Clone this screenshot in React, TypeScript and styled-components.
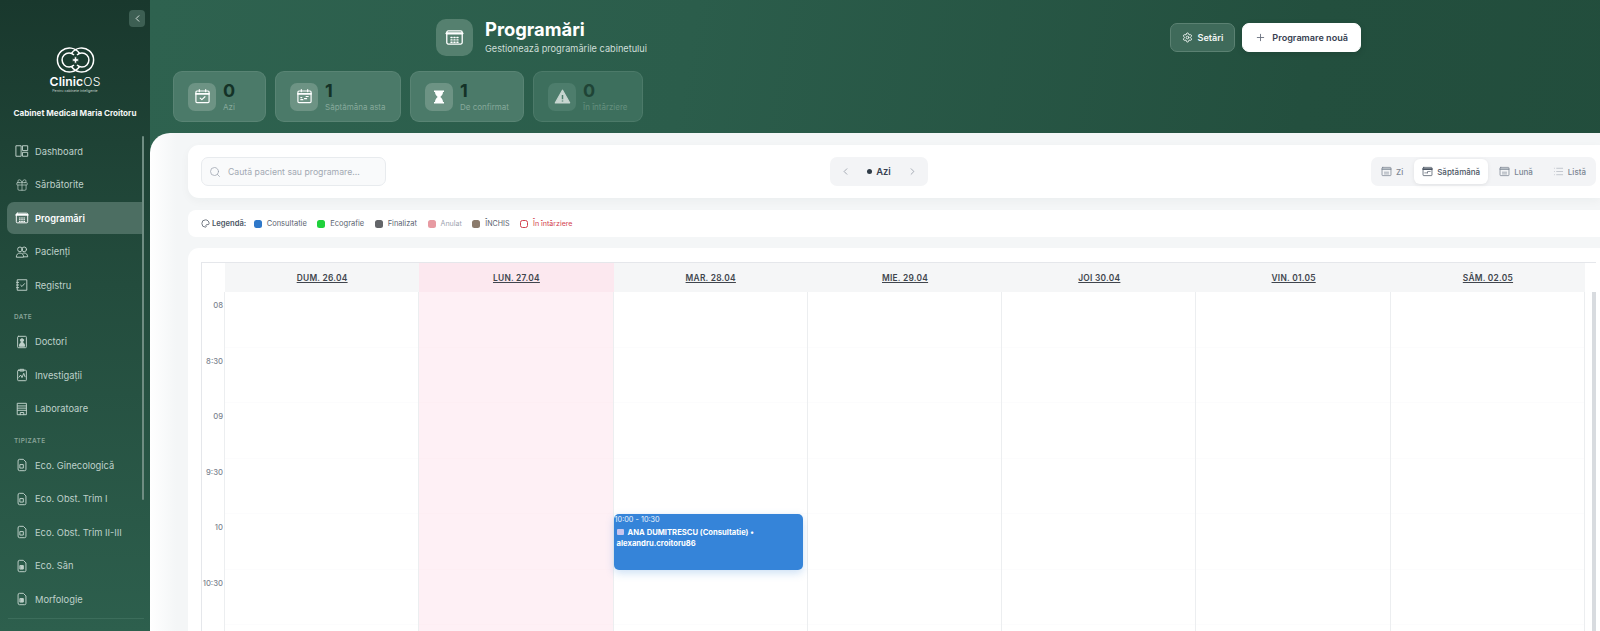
import styled, { createGlobalStyle } from "styled-components";
import { ChevronLeft, ChevronRight, Gift, Plus, Search, Settings, List } from "lucide-react";
import type { ReactNode } from "react";

const GlobalStyle = createGlobalStyle`
  html, body, #root { margin: 0; height: 100%; }
  body { font-family: Inter, "Liberation Sans", sans-serif; overflow: hidden; background: #f4f6f7; }
  * { box-sizing: border-box; }
`;

const Page = styled.div`
  display: grid;
  grid-template-columns: 150px 1fr;
  width: 1600px;
  height: 631px;
  overflow: hidden;
`;

const Sidebar = styled.aside`
  position: relative;
  display: flex;
  flex-direction: column;
  height: 631px;
  overflow: hidden;
  background: linear-gradient(180deg, #19382d 0%, #234c3d 45%, #2d5f4d 100%);
`;

const CollapseButton = styled.button`
  position: absolute;
  top: 10px;
  left: 129px;
  display: flex;
  align-items: center;
  justify-content: center;
  width: 16px;
  height: 17px;
  padding: 0;
  border: 0;
  border-radius: 4px;
  background: #3d5f53;
  color: #dfe8e4;
`;

const Brand = styled.div`
  display: flex;
  flex-direction: column;
  align-items: center;
  padding-top: 47px;
  height: 134.6px;
`;

const LogoName = styled.div`
  margin-top: 3px;
  font-size: 12.2px;
  line-height: 12px;
  font-weight: 600;
  color: #fff;
  letter-spacing: 0.1px;
  span { font-weight: 300; }
`;

const LogoTag = styled.div`
  font-size: 3.6px;
  line-height: 6px;
  color: #c6d4ce;
`;

const CabinetName = styled.div`
  margin-top: 13px;
  font-size: 8.1px;
  line-height: 12px;
  font-weight: 700;
  color: #f3f6f5;
  white-space: nowrap;
`;

const NavScroll = styled.nav`
  position: relative;
  flex: 1;
  padding: 0 8px 0 7px;
`;

const ScrollThumb = styled.div`
  position: absolute;
  top: 1px;
  left: 142px;
  width: 2px;
  height: 364px;
  border-radius: 1px;
  background: #6f8d82;
`;

const NavItem = styled.div<{ $active?: boolean }>`
  display: flex;
  align-items: center;
  gap: 6px;
  height: ${({ $active }) => ($active ? "32px" : "33.5px")};
  margin: ${({ $active }) => ($active ? "0.75px 0" : "0")};
  padding-left: 8px;
  border-radius: ${({ $active }) => ($active ? "7px 0 0 7px" : "7px")};
  font-size: 9.3px;
  font-weight: ${({ $active }) => ($active ? 600 : 400)};
  color: ${({ $active }) => ($active ? "#fff" : "#bfd1ca")};
  background: ${({ $active }) => ($active ? "#4c6e62" : "transparent")};
  svg { flex: none; }
`;

const NavSection = styled.div`
  height: 14px;
  margin-top: 9px;
  padding-left: 7px;
  font-size: 6.4px;
  line-height: 12px;
  font-weight: 600;
  letter-spacing: 0.4px;
  color: #88a398;
`;

const SidebarDivider = styled.div`
  position: absolute;
  left: 8px;
  right: 6px;
  top: 618px;
  height: 1px;
  background: #3c6d5b;
`;

const Main = styled.main`
  display: flex;
  flex-direction: column;
  min-width: 0;
  height: 631px;
  background: linear-gradient(100deg, #2e624f 0%, #2b5d4b 35%, #234f3e 75%, #224d3c 100%);
`;

const Header = styled.header`
  height: 133px;
  flex: none;
`;

const HeaderTop = styled.div`
  display: flex;
  justify-content: space-between;
  height: 71px;
  padding: 19px 239px 0 286px;
`;

const TitleGroup = styled.div`
  display: flex;
  gap: 12px;
`;

const TitleIcon = styled.div`
  display: flex;
  align-items: center;
  justify-content: center;
  width: 37px;
  height: 37px;
  border-radius: 10px;
  background: #55806f;
  color: #fff;
`;

const TitleText = styled.div`
  display: flex;
  flex-direction: column;
`;

const PageTitle = styled.h1`
  margin: 0;
  font-size: 18.4px;
  line-height: 21px;
  font-weight: 700;
  color: #fff;
`;

const PageSubtitle = styled.p`
  margin: 3px 0 0;
  font-size: 9.2px;
  line-height: 12px;
  color: #cfdfd9;
`;

const Actions = styled.div`
  display: flex;
  gap: 7px;
  height: 33px;
  padding-top: 4px;
`;

const ActionButton = styled.button<{ $primary?: boolean }>`
  display: flex;
  align-items: center;
  gap: ${({ $primary }) => ($primary ? "6px" : "5px")};
  height: 29px;
  padding: 0 ${({ $primary }) => ($primary ? "12px" : "11px")};
  border: 1px solid ${({ $primary }) => ($primary ? "#fff" : "#5b8172")};
  border-radius: 7px;
  background: ${({ $primary }) => ($primary ? "#fff" : "#3f6a5a")};
  color: ${({ $primary }) => ($primary ? "#374151" : "#f2f6f4")};
  font-family: inherit;
  font-size: 9.1px;
  font-weight: 600;
  box-shadow: ${({ $primary }) => ($primary ? "0 2px 6px rgba(0,0,0,.12)" : "none")};
`;

const StatRow = styled.div`
  display: flex;
  gap: 9px;
  padding: 0 0 0 23px;
`;

const StatCard = styled.div<{ $width: number; $dim?: boolean }>`
  display: flex;
  align-items: center;
  gap: 7px;
  width: ${({ $width }) => $width}px;
  height: 51px;
  padding-left: 14px;
  border: 1px solid rgba(255, 255, 255, 0.08);
  border-radius: 9px;
  background: ${({ $dim }) => ($dim ? "#3d6f5d" : "#4b7a69")};
`;

const StatIcon = styled.div<{ $dim?: boolean }>`
  display: flex;
  align-items: center;
  justify-content: center;
  width: 28px;
  height: 28px;
  border-radius: 7px;
  background: ${({ $dim }) => ($dim ? "#4d7d6c" : "#6d9384")};
  color: ${({ $dim }) => ($dim ? "#c7d6d0" : "#fff")};
`;

const StatText = styled.div`
  display: flex;
  flex-direction: column;
`;

const StatValue = styled.div<{ $dim?: boolean }>`
  font-size: 18px;
  line-height: 20px;
  font-weight: 700;
  color: ${({ $dim }) => ($dim ? "#1f4436" : "#143227")};
`;

const StatLabel = styled.div<{ $dim?: boolean }>`
  margin-top: 1px;
  font-size: 8px;
  line-height: 11px;
  color: ${({ $dim }) => ($dim ? "#66907f" : "#87a99b")};
`;

const Panel = styled.section`
  flex: 1;
  min-height: 0;
  overflow: hidden;
  padding: 12px 0 0 38px;
  border-radius: 20px 0 0 0;
  background: linear-gradient(90deg, #ffffff 0%, #f4f6f7 26px);
`;

const Toolbar = styled.div`
  display: flex;
  align-items: center;
  height: 53px;
  padding: 0 4px 0 13px;
  border-radius: 11px 0 0 11px;
  background: #fff;
  box-shadow: 0 3px 10px rgba(30, 60, 50, 0.04);
`;

const SearchBox = styled.div`
  display: flex;
  align-items: center;
  gap: 7px;
  width: 185px;
  height: 29px;
  padding-left: 7px;
  border: 1px solid #e8ebee;
  border-radius: 7px;
  background: #f9fafb;
  font-size: 8.7px;
  color: #a2a9b3;
`;

const DateNav = styled.div`
  display: flex;
  align-items: center;
  justify-content: space-between;
  width: 98px;
  height: 29px;
  margin-left: 444px;
  padding: 0 10px;
  border-radius: 7px;
  background: #f3f4f6;
  color: #7b8592;
`;

const TodayLabel = styled.div`
  display: flex;
  align-items: center;
  gap: 4px;
  font-size: 9.4px;
  font-weight: 600;
  color: #374151;
  &::before {
    content: "";
    width: 5px;
    height: 5px;
    border-radius: 50%;
    background: #2f3b47;
  }
`;

const ViewTabs = styled.div`
  display: flex;
  align-items: center;
  gap: 2px;
  margin-left: auto;
  height: 29px;
  padding: 0 1px;
  border-radius: 7px;
  background: #f3f4f6;
`;

const ViewTab = styled.div<{ $active?: boolean }>`
  display: flex;
  align-items: center;
  gap: 4px;
  height: 25px;
  padding: 0 ${({ $active }) => ($active ? "8px" : "9px")};
  border-radius: 6px;
  background: ${({ $active }) => ($active ? "#fff" : "transparent")};
  color: ${({ $active }) => ($active ? "#4b5563" : "#7b8592")};
  font-size: 8px;
  font-weight: 500;
  box-shadow: ${({ $active }) => ($active ? "0 1px 4px rgba(0,0,0,.08)" : "none")};
`;

const LegendBar = styled.div`
  display: flex;
  align-items: center;
  gap: 10.5px;
  height: 27px;
  margin-top: 12px;
  padding-left: 13px;
  border-radius: 8px 0 0 8px;
  background: #fff;
`;

const LegendTitle = styled.div`
  display: flex;
  align-items: center;
  gap: 2px;
  font-size: 7.6px;
  font-weight: 600;
  color: #4b5563;
  margin-right: -3px;
`;

const LegendItem = styled.div<{ $color?: string; $small?: boolean }>`
  display: flex;
  align-items: center;
  gap: 5px;
  font-size: ${({ $small }) => ($small ? "7.1px" : "7.5px")};
  color: ${({ $color }) => $color ?? "#5b6470"};
`;

const LegendDot = styled.span<{ $bg: string; $outline?: boolean }>`
  width: 8px;
  height: 8px;
  border-radius: 2.5px;
  background: ${({ $outline, $bg }) => ($outline ? "transparent" : $bg)};
  border: ${({ $outline, $bg }) => ($outline ? `1.5px solid ${$bg}` : "0")};
`;

const CalendarCard = styled.div`
  margin-top: 11px;
  padding: 14px 4px 0 13px;
  height: 400px;
  border-radius: 11px 0 0 0;
  background: #fff;
`;

const Table = styled.div`
  border-top: 1px solid #e5e7eb;
  border-left: 1px solid #e5e7eb;
`;

const TableRow = styled.div<{ $body?: boolean }>`
  display: grid;
  grid-template-columns: 23px repeat(7, 194.3px) 1fr;
  min-height: ${({ $body }) => ($body ? "345px" : "0")};
`;

const HeadCell = styled.div<{ $today?: boolean; $blank?: boolean }>`
  display: flex;
  align-items: center;
  justify-content: center;
  height: 29px;
  background: ${({ $today, $blank }) => ($blank ? "#fff" : $today ? "#fce8ef" : "#f5f6f7")};
  font-size: 8.4px;
  font-weight: 600;
  letter-spacing: 0.25px;
  color: #40454d;
  text-decoration: underline;
`;

const TimeColumn = styled.div`
  border-right: 1px solid #eceef0;
`;

const TimeSlot = styled.div`
  height: 55.5px;
  padding-top: 9px;
  padding-right: 1px;
  font-size: 7.7px;
  line-height: 10px;
  font-weight: 500;
  text-align: right;
  color: #7d8590;
`;

const DayColumn = styled.div<{ $today?: boolean }>`
  position: relative;
  border-right: 1px solid #eceef0;
  background: ${({ $today }) => ($today ? "#fef0f5" : "#fff")};
`;

const DaySlot = styled.div<{ $today?: boolean }>`
  height: 55.5px;
  border-bottom: 1px solid ${({ $today }) => ($today ? "#fdeef3" : "#fcfcfd")};
`;

const EventCard = styled.div`
  position: absolute;
  top: 222px;
  left: 0;
  width: 189px;
  height: 56px;
  padding: 1px;
  border-radius: 5px;
  background: #3584d9;
  color: #fff;
  font-size: 7.3px;
  box-shadow: 0 3px 8px rgba(53, 132, 217, 0.25);
`;

const EventTime = styled.div`
  line-height: 10px;
  color: #eaf3fc;
`;

const EventTitle = styled.div`
  margin-top: 2px;
  padding-left: 2px;
  font-size: 7.65px;
  line-height: 11px;
  font-weight: 700;
`;

const EventIcon = styled.span`
  display: inline-block;
  width: 7px;
  height: 6px;
  margin-right: 4px;
  border-radius: 1px;
  background: #c9c6ee;
`;

const ScrollGutter = styled.div`
  display: flex;
  justify-content: flex-end;
`;

const ScrollBar = styled.div`
  width: 4px;
  height: 340px;
  background: #d8dbdf;
`;

const LogoMark = () => (
  <svg width="39" height="26" viewBox="0 0 39 26" fill="none" stroke="#fff" strokeWidth="1.5">
    <path d="M23.500 6.500A12 12 0 1 0 23.500 19.500" />
    <path d="M18 8A7 7 0 1 0 18 18" />
    <path d="M15.500 19.500A12 12 0 1 0 15.500 6.500" />
    <path d="M21 18A7 7 0 1 0 21 8" />
    <path d="M18.300 9.800h2.400v2.000h2v2.400h-2v2h-2.400v-2h-2v-2.400h2z" fill="#fff" stroke="#19382d" strokeWidth="0.8" />
  </svg>
);

type IconProps = { children: ReactNode; size?: number };

const Glyph = ({ children, size = 14 }: IconProps) => (
  <svg width={size} height={size} viewBox="0 0 16 16" fill="none" stroke="currentColor" strokeWidth="1.1" strokeLinejoin="round" strokeLinecap="round">
    {children}
  </svg>
);

const DashboardIcon = () => (
  <Glyph>
    <rect x="1.500" y="2" width="5.500" height="12" />
    <rect x="9" y="2" width="5.500" height="5.500" />
    <rect x="9" y="9.500" width="5.500" height="4.500" />
  </Glyph>
);

const CalendarGridIcon = ({ size = 14 }: { size?: number }) => (
  <Glyph size={size}>
    <rect x="1.500" y="2.500" width="13" height="11" rx="1.200" />
    <path d="M1.500 4.500h13" strokeWidth="2" />
    <path d="M5 8h1M7.500 8h1M10 8h1M5 10h1M7.500 10h1M10 10h1M5 12h1M7.500 12h1M10 12h1" />
  </Glyph>
);

const UsersIcon = () => (
  <Glyph>
    <circle cx="5.700" cy="5" r="2.700" />
    <circle cx="10.500" cy="5" r="2.700" />
    <path d="M1.500 13.500c0-2.600 1.800-4.300 4.200-4.300s4.200 1.700 4.200 4.300z" />
    <path d="M9 9.400c.5-.2 1-.2 1.500-.2 2.400 0 4 1.700 4 4.300h-4" />
  </Glyph>
);

const RegisterIcon = () => (
  <Glyph>
    <rect x="3" y="2" width="10.500" height="12" />
    <path d="M1.800 5h2.400M1.800 8h2.400M1.800 11h2.400M6.500 8.300l1.500 1.400 2.800-3.200" />
  </Glyph>
);

const DoctorIcon = () => (
  <Glyph>
    <rect x="3" y="1.500" width="10" height="13" rx="1" />
    <circle cx="8" cy="6" r="1.800" fill="currentColor" />
    <path d="M5 12.500c0-2.500 1.200-4 3-4s3 1.500 3 4z" fill="currentColor" />
  </Glyph>
);

const InvestigationIcon = () => (
  <Glyph>
    <rect x="3" y="2.500" width="10" height="12" rx="1" />
    <path d="M6 1.500h4v2H6zM4.500 10.500l2-2.500 1.500 3 2-5 1.500 4" />
  </Glyph>
);

const LabIcon = () => (
  <Glyph>
    <rect x="3" y="1.500" width="10" height="13" />
    <path d="M3 4.500h10M3 7h10M3 9.500h10M6 14.500V12h4v2.500" />
  </Glyph>
);

const FileIcon = ({ filled }: { filled?: boolean }) => (
  <Glyph>
    <path d="M3.500 3A1.500 1.500 0 0 1 5 1.500h4.500L12.500 4.500V13A1.500 1.500 0 0 1 11 14.500H5A1.500 1.500 0 0 1 3.500 13z" />
    <path d="M6 7.500h3.500v4H6z" fill={filled ? "currentColor" : "none"} />
  </Glyph>
);

const CalendarPlain = ({ size = 14, check }: { size?: number; check?: boolean }) => (
  <Glyph size={size}>
    <rect x="1.800" y="2.800" width="12.400" height="11" rx="1" />
    <path d="M1.800 5.500h12.400" strokeWidth="1.600" />
    <path d="M5 1.500v2M11 1.500v2" />
    {check ? <path d="M5.800 9.500l1.600 1.400 2.900-2.700" /> : <path d="M4.500 11h2M4.500 9h1M9.500 8h2M8 10h2" />}
  </Glyph>
);

const ViewIcon = ({ dark }: { dark?: boolean }) => (
  <Glyph size={11}>
    <rect x="1.500" y="2" width="13" height="12" rx="1" />
    <path d="M1.500 4.500h13" strokeWidth={dark ? 2.400 : 1.600} />
    <path d={dark ? "M4 10h4M8 10V8h4" : "M5 9h6M5 11.500h6"} strokeWidth="0.9" />
  </Glyph>
);

const HourglassIcon = () => (
  <svg width="16" height="16" viewBox="0 0 16 16" fill="currentColor">
    <path d="M3 1.500h10v1.600h-1c0 2.600-1.500 3.800-2.700 4.900 1.200 1.100 2.700 2.300 2.700 4.900h1v1.600H3v-1.600h1c0-2.600 1.500-3.800 2.700-4.900C5.500 6.900 4 5.700 4 3.100H3z" />
  </svg>
);

const WarningIcon = () => (
  <svg width="17" height="17" viewBox="0 0 16 16">
    <path d="M8 2l6.800 12H1.200z" fill="currentColor" stroke="currentColor" strokeLinejoin="round" />
    <path d="M8 6.500v4M8 11.800v.8" stroke="#4d7d6c" strokeWidth="1.400" />
  </svg>
);

const PaletteIcon = () => (
  <svg width="9" height="9" viewBox="0 0 16 16" fill="none" stroke="#5b6470" strokeWidth="1.500">
    <path d="M8 1.500a6.500 6.500 0 1 0 0 13c1.600 0 1.600-1.500.9-2.400-.7-1 0-2.100 1.200-2.100h2.400c1.300 0 1.900-1 1.900-2.200C14.400 4.200 11.500 1.500 8 1.500z" />
  </svg>
);

const days = ["DUM. 26.04", "LUN. 27.04", "MAR. 28.04", "MIE. 29.04", "JOI 30.04", "VIN. 01.05", "SÂM. 02.05"];
const times = ["08", "8:30", "09", "9:30", "10", "10:30"];

const App = () => (
  <Page>
    <GlobalStyle />
    <Sidebar>
      <CollapseButton>
        <ChevronLeft size={11} />
      </CollapseButton>
      <Brand>
        <LogoMark />
        <LogoName>
          Clinic<span>OS</span>
        </LogoName>
        <LogoTag>Pentru cabinete inteligente</LogoTag>
        <CabinetName>Cabinet Medical Maria Croitoru</CabinetName>
      </Brand>
      <NavScroll>
        <ScrollThumb />
        <NavItem><DashboardIcon />Dashboard</NavItem>
        <NavItem><Gift size={14} strokeWidth={1.2} />Sărbătorite</NavItem>
        <NavItem $active><CalendarGridIcon />Programări</NavItem>
        <NavItem><UsersIcon />Pacienți</NavItem>
        <NavItem><RegisterIcon />Registru</NavItem>
        <NavSection>DATE</NavSection>
        <NavItem><DoctorIcon />Doctori</NavItem>
        <NavItem><InvestigationIcon />Investigații</NavItem>
        <NavItem><LabIcon />Laboratoare</NavItem>
        <NavSection>TIPIZATE</NavSection>
        <NavItem><FileIcon />Eco. Ginecologică</NavItem>
        <NavItem><FileIcon />Eco. Obst. Trim I</NavItem>
        <NavItem><FileIcon />Eco. Obst. Trim II-III</NavItem>
        <NavItem><FileIcon filled />Eco. Sân</NavItem>
        <NavItem><FileIcon filled />Morfologie</NavItem>
      </NavScroll>
      <SidebarDivider />
    </Sidebar>
    <Main>
      <Header>
        <HeaderTop>
          <TitleGroup>
            <TitleIcon><CalendarGridIcon size={19} /></TitleIcon>
            <TitleText>
              <PageTitle>Programări</PageTitle>
              <PageSubtitle>Gestionează programările cabinetului</PageSubtitle>
            </TitleText>
          </TitleGroup>
          <Actions>
            <ActionButton><Settings size={11} />Setări</ActionButton>
            <ActionButton $primary><Plus size={11} color="#6b7280" />Programare nouă</ActionButton>
          </Actions>
        </HeaderTop>
        <StatRow>
          <StatCard $width={93}>
            <StatIcon><CalendarPlain size={17} check /></StatIcon>
            <StatText><StatValue>0</StatValue><StatLabel>Azi</StatLabel></StatText>
          </StatCard>
          <StatCard $width={126}>
            <StatIcon><CalendarPlain size={17} /></StatIcon>
            <StatText><StatValue>1</StatValue><StatLabel>Săptămâna asta</StatLabel></StatText>
          </StatCard>
          <StatCard $width={114}>
            <StatIcon><HourglassIcon /></StatIcon>
            <StatText><StatValue>1</StatValue><StatLabel>De confirmat</StatLabel></StatText>
          </StatCard>
          <StatCard $width={110} $dim>
            <StatIcon $dim><WarningIcon /></StatIcon>
            <StatText><StatValue $dim>0</StatValue><StatLabel $dim>În întârziere</StatLabel></StatText>
          </StatCard>
        </StatRow>
      </Header>
      <Panel>
        <Toolbar>
          <SearchBox><Search size={12} strokeWidth={1.5} color="#9ca3af" />Caută pacient sau programare...</SearchBox>
          <DateNav>
            <ChevronLeft size={11} strokeWidth={1.4} />
            <TodayLabel>Azi</TodayLabel>
            <ChevronRight size={11} strokeWidth={1.4} />
          </DateNav>
          <ViewTabs>
            <ViewTab><ViewIcon />Zi</ViewTab>
            <ViewTab $active><ViewIcon dark />Săptămână</ViewTab>
            <ViewTab><ViewIcon />Lună</ViewTab>
            <ViewTab><List size={11} strokeWidth={1.2} color="#9ca3af" />Listă</ViewTab>
          </ViewTabs>
        </Toolbar>
        <LegendBar>
          <LegendTitle><PaletteIcon />Legendă:</LegendTitle>
          <LegendItem><LegendDot $bg="#2f78c9" />Consultatie</LegendItem>
          <LegendItem><LegendDot $bg="#1fd13c" />Ecografie</LegendItem>
          <LegendItem><LegendDot $bg="#636569" />Finalizat</LegendItem>
          <LegendItem $small $color="#9ca3af"><LegendDot $bg="#e79aa2" />Anulat</LegendItem>
          <LegendItem $small><LegendDot $bg="#8b7b6c" />ÎNCHIS</LegendItem>
          <LegendItem $small $color="#d2414e"><LegendDot $bg="#d2414e" $outline />În întârziere</LegendItem>
        </LegendBar>
        <CalendarCard>
          <Table>
            <TableRow>
              <HeadCell $blank />
              {days.map((day, i) => (
                <HeadCell key={day} $today={i === 1}>{day}</HeadCell>
              ))}
              <HeadCell $blank />
            </TableRow>
            <TableRow $body>
              <TimeColumn>
                {times.map((t) => <TimeSlot key={t}>{t}</TimeSlot>)}
              </TimeColumn>
              {days.map((day, i) => (
                <DayColumn key={day} $today={i === 1}>
                  {times.map((t) => <DaySlot key={t} $today={i === 1} />)}
                  {i === 2 && (
                    <EventCard>
                      <EventTime>10:00 - 10:30</EventTime>
                      <EventTitle>
                        <EventIcon />
                        ANA DUMITRESCU (Consultatie) • alexandru.croitoru86
                      </EventTitle>
                    </EventCard>
                  )}
                </DayColumn>
              ))}
              <ScrollGutter><ScrollBar /></ScrollGutter>
            </TableRow>
          </Table>
        </CalendarCard>
      </Panel>
    </Main>
  </Page>
);

export default App;
